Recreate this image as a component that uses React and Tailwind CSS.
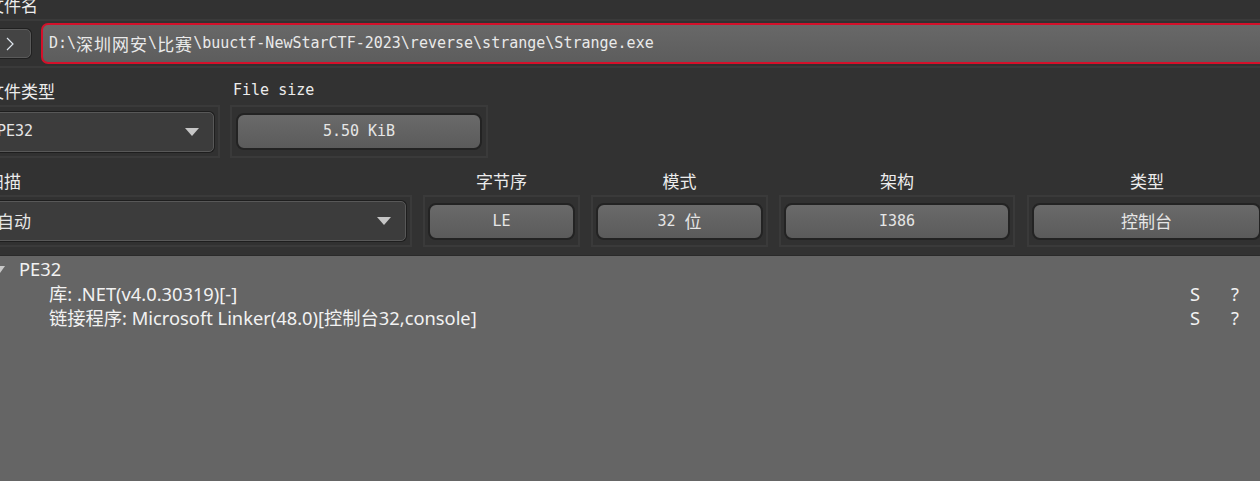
import React from 'react';

const mono = "font-['DejaVu_Sans_Mono','Noto_Sans_CJK_SC',monospace]";
const cjk = "font-['Noto_Sans_CJK_SC',sans-serif] text-[17px]";

function Frame({ className = '', children }) {
  return (
    <div className={`flex items-center border-2 border-[#3a3a3a] bg-[#313131] ${className}`}>
      {children}
    </div>
  );
}

function Button({ className = '', children }) {
  return (
    <div
      className={`flex items-center justify-center h-[37px] rounded-[8px] border-2 border-[#232323] bg-gradient-to-b from-[#6a6a6a] to-[#5b5b5b] text-[15px] text-[#e6e6e6] ${className}`}
    >
      {children}
    </div>
  );
}

function Combo({ className = '', children }) {
  return (
    <div
      className={`flex items-center h-[40px] rounded-[5px] border border-[#585858] bg-[#3c3c3c] shadow-[0_0_0_1px_#1e1e1e] text-[15px] text-[#e6e6e6] ${className}`}
    >
      <div className="flex-1 pl-[7px]">{children}</div>
      <svg width="14" height="8" viewBox="0 0 14 8" className="mr-[14px]">
        <path d="M0 0H14L7 8Z" fill="#c6c6c6" />
      </svg>
    </div>
  );
}

function Column({ label, width, className = '', children }) {
  return (
    <div className={`flex flex-col ${className}`} style={{ width }}>
      <div className={`h-[37px] pt-[8px] flex items-center justify-center ${cjk} text-[#ececec]`}>{label}</div>
      <Frame className="h-[52px] px-[3px]">{children}</Frame>
    </div>
  );
}

export default function App() {
  return (
    <div className={`w-[1260px] h-[481px] overflow-hidden bg-[#323232] text-[#e8e8e8] ${mono}`}>
      <div className="ml-[-13px] w-[1300px] flex flex-col h-full">
        {/* file name */}
        <div className={`h-[19px] flex items-end pb-[6px] leading-[17px] ${cjk} text-[#ececec]`}>文件名</div>
        <div className="h-[49px] flex items-center border-y-2 border-[#3a3a3a] bg-[#313131]">
          <div className="w-[44px] h-[29px] rounded-[5px] border border-[#5a5a5a] bg-[#444444] shadow-[0_0_0_1px_#202020] flex items-center justify-center">
            <svg width="8" height="14" viewBox="0 0 8 14" className="ml-[2px]">
              <path d="M1 1L7 7L1 13" fill="none" stroke="#dfe6ee" strokeWidth="1.2" />
            </svg>
          </div>
          <div className="ml-[10px] flex-1 h-[41px] flex items-center rounded-[7px] border-2 border-[#d4102a] bg-gradient-to-b from-[#686868] to-[#5d5d5d] pl-[6px] text-[15px] text-[#eaeaea]">
            D:\<span className={`${cjk} tracking-[1px]`}>深圳网安</span>\<span className={`${cjk} tracking-[1px]`}>比赛</span>\buuctf-NewStarCTF-2023\reverse\strange\Strange.exe
          </div>
        </div>

        {/* file type + size */}
        <div className="flex gap-[10px]">
          <div className="flex flex-col w-[233px]">
            <div className={`h-[37px] pt-[8px] flex items-center ${cjk} text-[#ececec]`}>文件类型</div>
            <Frame className="h-[53px] pr-[4px]">
              <Combo className="w-full">PE32</Combo>
            </Frame>
          </div>
          <div className="flex flex-col w-[258px]">
            <div className="h-[37px] pt-[8px] flex items-center pl-[3px] text-[15px] text-[#ececec]">File size</div>
            <Frame className="h-[53px] px-[4px]">
              <Button className="w-full h-[36px]">5.50 KiB</Button>
            </Frame>
          </div>
        </div>

        {/* scan row */}
        <div className="flex gap-[11px]">
          <div className="flex flex-col w-[425px]">
            <div className={`h-[37px] pt-[8px] flex items-center ${cjk} text-[#ececec]`}>扫描</div>
            <Frame className="h-[52px] pr-[4px]">
              <Combo className="w-full">
                <span className={cjk}>自动</span>
              </Combo>
            </Frame>
          </div>
          <Column label="字节序" width="157px">
            <Button className="w-full">LE</Button>
          </Column>
          <Column label="模式" width="177px">
            <Button className="w-full">
              32 <span className={`${cjk} ml-[9px]`}>位</span>
            </Button>
          </Column>
          <Column label="架构" width="236px">
            <Button className="w-full">I386</Button>
          </Column>
          <Column label="类型" width="240px" className="ml-[1px]">
            <Button className="w-[229px]">
              <span className={cjk}>控制台</span>
            </Button>
          </Column>
        </div>

        {/* tree */}
        <div className="mt-[8px] flex-1 border-t border-[#2a2a2a] bg-[#656565] pt-[1px] font-['Noto_Sans','Noto_Sans_CJK_SC',sans-serif] text-[18.3px] leading-[24.5px] text-[#f2f2f2]">
          <div className="flex items-center">
            <svg width="10" height="7" viewBox="0 0 10 7" className="ml-[8px] mr-[14px]">
              <path d="M0 0H10L5 7Z" fill="#c8c8c8" />
            </svg>
            <span>PE32</span>
          </div>
          <div className="grid grid-cols-[1203px_41px_1fr]">
            <span className="pl-[62px]">库: .NET(v4.0.30319)[-]</span>
            <span>S</span>
            <span>?</span>
          </div>
          <div className="grid grid-cols-[1203px_41px_1fr]">
            <span className="pl-[62px]">链接程序: Microsoft Linker(48.0)[控制台32,console]</span>
            <span>S</span>
            <span>?</span>
          </div>
        </div>
      </div>
    </div>
  );
}
